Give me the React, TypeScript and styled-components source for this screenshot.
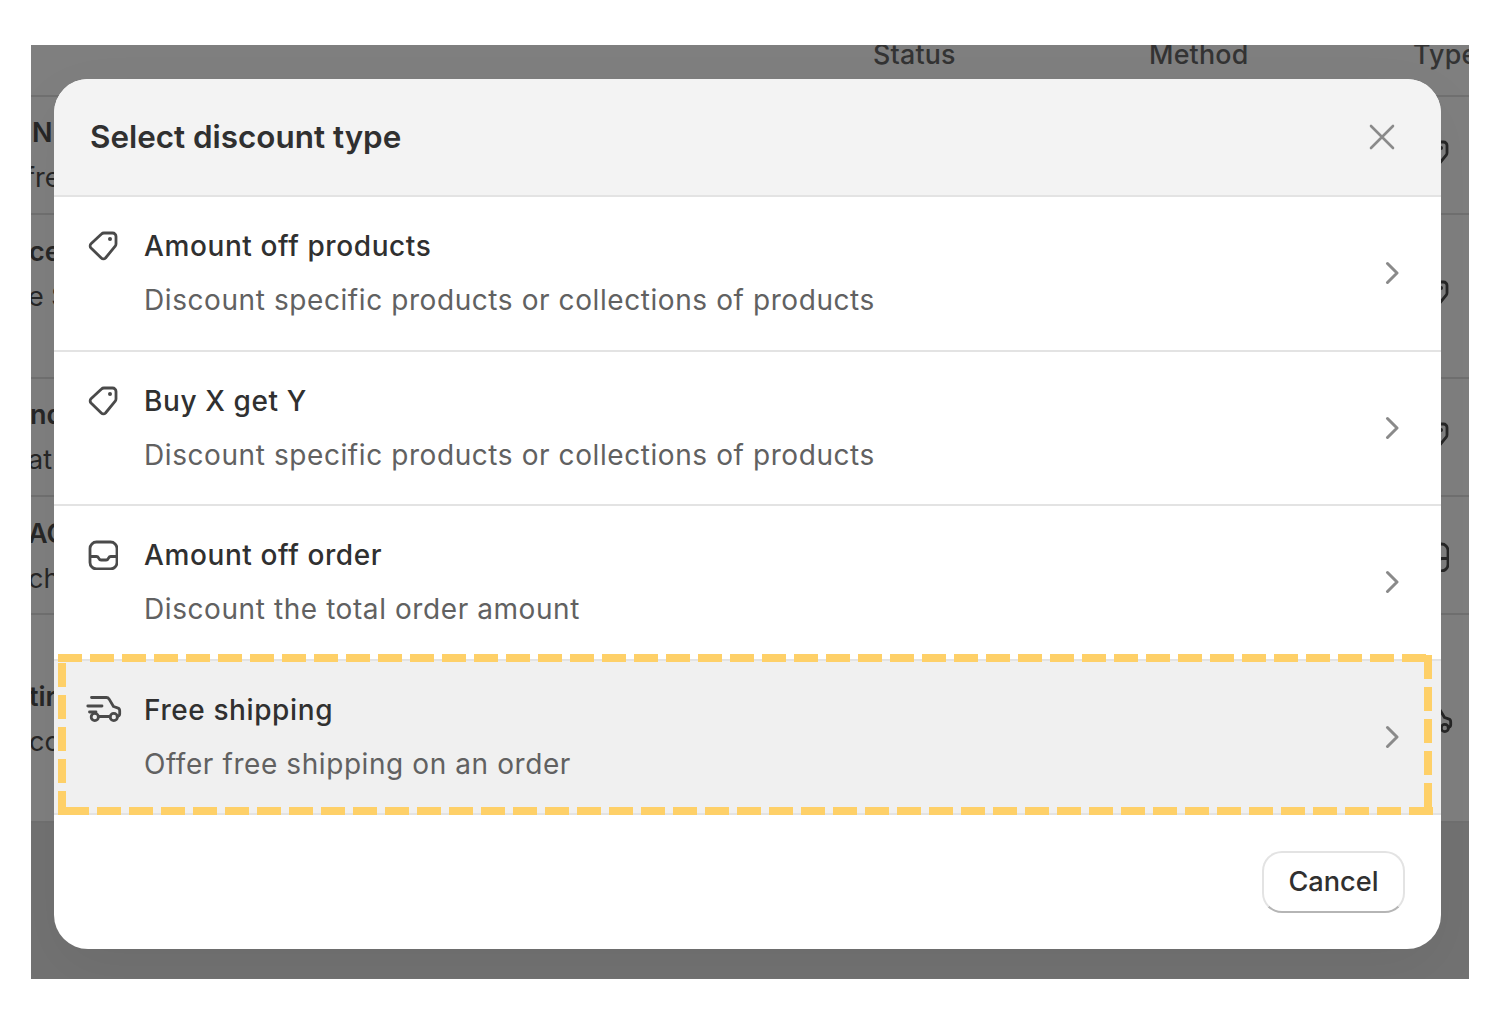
import React from 'react';
import styled, { createGlobalStyle } from 'styled-components';

const Global = createGlobalStyle`
  html, body { margin: 0; padding: 0; background: #fff; }
  body { font-family: Inter, "Liberation Sans", sans-serif; color: #303030; }
`;

const Page = styled.div`
  width: 1500px;
  height: 1024px;
  padding: 45px 31px 0;
  box-sizing: border-box;
  overflow: hidden;
`;

const Backdrop = styled.div`
  position: relative;
  height: 934px;
  overflow: hidden;
  background: #727272;
`;

const Table = styled.div`
  display: flex;
  flex-direction: column;
  background: #7f7f7f;
  color: #262626;
  height: 778px;
  font-size: 27px;
`;

const HeadRow = styled.div`
  height: 52px;
  flex: none;
  box-sizing: border-box;
  border-bottom: 2px solid #707070;
  position: relative;
  overflow: hidden;
  font-weight: 500;
  font-size: 26.8px;
  color: #333;
  display: grid;
  grid-template-columns: 842px 276px 264px;
  line-height: 18px;
`;

const HeadCell = styled.div`
  grid-column: ${(p: { $col: number }) => p.$col};
  white-space: nowrap;
  letter-spacing: 0.2px;
`;

const BodyRow = styled.div<{ $h: number; $pad: number }>`
  flex: none;
  height: ${(p) => p.$h}px;
  padding-top: ${(p) => p.$pad}px;
  box-sizing: border-box;
  border-bottom: 2px solid #707070;
  display: flex;
  justify-content: space-between;
  align-items: flex-start;
`;

const Names = styled.div`
  display: flex;
  flex-direction: column;
`;

const Name = styled.div<{ $shift: number }>`
  height: 45px;
  line-height: 45px;
  margin-left: ${(p) => p.$shift}px;
  font-weight: 600;
  white-space: nowrap;
`;

const Sub = styled.div<{ $shift: number }>`
  height: 45px;
  line-height: 45px;
  margin-left: ${(p) => p.$shift}px;
  white-space: nowrap;
`;

const RowIcon = styled.div<{ $top: number }>`
  margin: ${(p) => p.$top}px 20px 0 0;
  width: 30px;
  height: 30px;
  color: #262626;
`;

const Modal = styled.div`
  position: absolute;
  left: 23px;
  top: 34px;
  width: 1387px;
  height: 870px;
  border-radius: 34px;
  background: #fff;
  overflow: hidden;
  display: flex;
  flex-direction: column;
  box-shadow: 0 20px 60px rgba(0, 0, 0, 0.05);
`;

const Header = styled.div`
  height: 118px;
  flex: none;
  box-sizing: border-box;
  background: #f3f3f3;
  border-bottom: 2px solid #e3e3e3;
  padding: 0 46px 0 36px;
  display: flex;
  align-items: center;
  justify-content: space-between;
`;

const Title = styled.h2`
  margin: 2px 0 0;
  font-size: 31.4px;
  font-weight: 600;
  color: #303030;
  line-height: 1;
`;

const CloseButton = styled.button`
  width: 26px;
  height: 26px;
  padding: 0;
  border: 0;
  background: none;
  color: #8a8a8a;
  display: block;
`;

const Options = styled.div`
  flex: none;
  display: flex;
  flex-direction: column;
`;

const Option = styled.div<{ $active?: boolean }>`
  position: relative;
  height: 154.5px;
  flex: none;
  box-sizing: border-box;
  border-bottom: 2px solid #e3e3e3;
  background: ${(p) => (p.$active ? '#f0f0f0' : '#fff')};
  padding: 33px 42px 0 34px;
  display: flex;
  align-items: flex-start;
  gap: 26px;
`;

const IconSlot = styled.div`
  width: 30px;
  height: 30px;
  flex: none;
  margin-top: 1px;
  color: #4a4a4a;
`;

const Truck = styled.svg`
  display: block;
  margin-left: -2px;
  width: 36px;
  height: 28px;
`;

const OptionText = styled.div`
  flex: 1;
  display: flex;
  flex-direction: column;
  gap: 21px;
`;

const OptionTitle = styled.div`
  font-size: 28px;
  font-weight: 500;
  line-height: 33px;
  color: #303030;
  letter-spacing: 0.6px;
`;

const OptionDesc = styled.div`
  font-size: 28px;
  line-height: 33px;
  color: #616161;
  letter-spacing: 0.58px;
`;

const Chevron = styled.svg`
  width: 14px;
  height: 24px;
  flex: none;
  align-self: center;
  margin-top: -33.5px;
  color: #8a8a8a;
`;

const Dashes = styled.svg`
  position: absolute;
  left: 0;
  top: -6.5px;
  width: 1387px;
  height: 162px;
  pointer-events: none;
`;

const Footer = styled.div`
  flex: 1;
  display: flex;
  justify-content: flex-end;
  align-items: flex-start;
  padding: 36px 36px 0 0;
`;

const CancelButton = styled.button`
  width: 143px;
  height: 62px;
  box-sizing: border-box;
  background: #fff;
  border: 2px solid #e3e3e3;
  border-bottom-color: #b5b5b5;
  border-radius: 20px;
  font-family: inherit;
  font-size: 27.2px;
  font-weight: 500;
  color: #303030;
  padding: 0 0 2px;
`;

const TagIcon = () => (
  <svg width="30" height="30" viewBox="0 0 30 30" fill="none" stroke="currentColor" strokeWidth="2.8" style={{ display: 'block' }}>
    <path d="M16 2H24.500a3.500 3.500 0 0 1 3.500 3.500V13a3.500 3.500 0 0 1-1 2.400L17.500 27a3 3 0 0 1-4.200 0L3 17a3 3 0 0 1 0-4.200L13.500 3a3.500 3.500 0 0 1 2.500-1Z" strokeLinejoin="round" />
    <circle cx="22" cy="8" r="2" fill="currentColor" stroke="none" />
  </svg>
);

const InboxIcon = () => (
  <svg width="30" height="30" viewBox="0 0 30 30" fill="none" stroke="currentColor" strokeWidth="2.8" style={{ display: 'block' }}>
    <rect x="2" y="2" width="27" height="27" rx="6.5" />
    <path d="M2 16.500H8.500c1 0 1.600.5 2 1.400.6 1.400 1.400 2.100 2.600 2.100h5c1.200 0 2-.7 2.600-2.100.4-.9 1-1.400 2-1.400H29" strokeLinejoin="round" />
  </svg>
);

const TruckIcon = () => (
  <Truck viewBox="0 0 36 28" fill="none" stroke="currentColor" strokeWidth="2.8" strokeLinecap="round" strokeLinejoin="round">
    <path d="M5.500 2.500H20.500a3 3 0 0 1 2.500 1.400L27.500 11.500 31.500 12.800a3 3 0 0 1 2.200 2.900V19a2.500 2.500 0 0 1-2.500 2.500" />
    <path d="M1.800 11H16" />
    <path d="M3.500 17H10" />
    <path d="M13 21.500H24" />
    <circle cx="8.800" cy="22" r="3.600" />
    <circle cx="27.800" cy="22" r="3.600" />
  </Truck>
);

const rows = [
  { h: 118, pad: 13, name: 'N', ns: 1, sub: 'fre', ss: -6, top: 43, Icon: TagIcon },
  { h: 164, pad: 14, name: 'ce', ns: -2, sub: 'e S', ss: -3, top: 65, Icon: TagIcon },
  { h: 118, pad: 13, name: 'nd', ns: -1, sub: 'at', ss: -3, top: 43, Icon: TagIcon },
  { h: 118, pad: 14, name: 'AC', ns: -3, sub: 'ch', ss: -3, top: 45, Icon: InboxIcon },
  { h: 208, pad: 59, name: 'tir', ns: -2, sub: 'co', ss: -2, top: 91, Icon: TruckIcon },
];

const options = [
  { title: 'Amount off products', desc: 'Discount specific products or collections of products', Icon: TagIcon },
  { title: 'Buy X get Y', desc: 'Discount specific products or collections of products', Icon: TagIcon },
  { title: 'Amount off order', desc: 'Discount the total order amount', Icon: InboxIcon },
  { title: 'Free shipping', desc: 'Offer free shipping on an order', Icon: TruckIcon, active: true },
];

export default function App() {
  return (
    <Page>
      <Global />
      <Backdrop>
        <Table>
          <HeadRow>
            <HeadCell $col={2}>Status</HeadCell>
            <HeadCell $col={3}>Method</HeadCell>
            <HeadCell $col={4}>Type</HeadCell>
          </HeadRow>
          {rows.map((r, i) => (
            <BodyRow key={i} $h={r.h} $pad={r.pad}>
              <Names>
                <Name $shift={r.ns}>{r.name}</Name>
                <Sub $shift={r.ss}>{r.sub}</Sub>
              </Names>
              <RowIcon $top={r.top - r.pad}>
                <r.Icon />
              </RowIcon>
            </BodyRow>
          ))}
        </Table>
        <Modal>
          <Header>
            <Title>Select discount type</Title>
            <CloseButton aria-label="Close">
              <svg width="26" height="26" viewBox="0 0 26 26" fill="none" stroke="currentColor" strokeWidth="2.6" strokeLinecap="round">
                <path d="M2 2 24 24M24 2 2 24" />
              </svg>
            </CloseButton>
          </Header>
          <Options>
            {options.map((o) => (
              <Option key={o.title} $active={o.active}>
                <IconSlot>
                  <o.Icon />
                </IconSlot>
                <OptionText>
                  <OptionTitle>{o.title}</OptionTitle>
                  <OptionDesc>{o.desc}</OptionDesc>
                </OptionText>
                <Chevron viewBox="0 0 14 24" fill="none" stroke="currentColor" strokeWidth="3" strokeLinecap="round" strokeLinejoin="round">
                  <path d="M2.500 2.500 12 12 2.500 21.500" />
                </Chevron>
                {o.active && (
                  <Dashes viewBox="0 0 1387 162" fill="none" stroke="#fed068" strokeWidth="8" strokeDasharray="24 8">
                    <path d="M4 4H1372" />
                    <path d="M1374 1V161" />
                    <path d="M11 157H1379" />
                    <path d="M8 9V161" />
                  </Dashes>
                )}
              </Option>
            ))}
          </Options>
          <Footer>
            <CancelButton>Cancel</CancelButton>
          </Footer>
        </Modal>
      </Backdrop>
    </Page>
  );
}
